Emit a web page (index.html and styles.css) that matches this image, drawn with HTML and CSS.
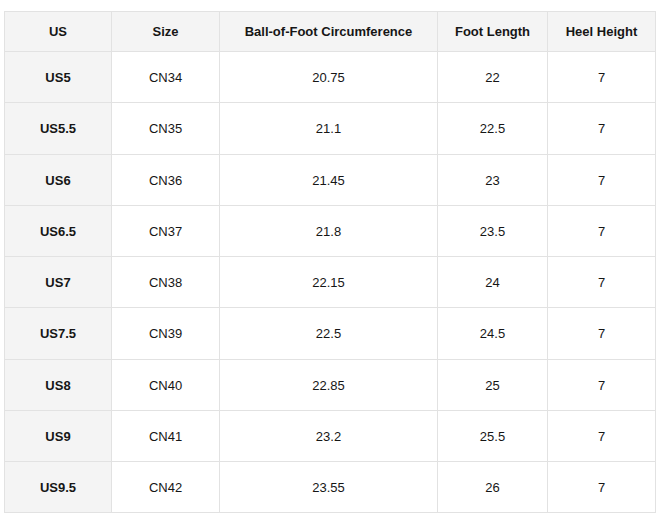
FILE: index.html
```html
<!DOCTYPE html>
<html>
<head>
<meta charset="utf-8">
<link rel="stylesheet" href="styles.css">
</head>
<body>
<div class="wrap">
<table class="size-table">
<colgroup>
<col class="c1"><col class="c2"><col class="c3"><col class="c4"><col class="c5">
</colgroup>
<thead>
<tr><th>US</th><th>Size</th><th>Ball-of-Foot Circumference</th><th>Foot Length</th><th>Heel Height</th></tr>
</thead>
<tbody>
<tr><th>US5</th><td>CN34</td><td>20.75</td><td>22</td><td>7</td></tr>
<tr><th>US5.5</th><td>CN35</td><td>21.1</td><td>22.5</td><td>7</td></tr>
<tr><th>US6</th><td>CN36</td><td>21.45</td><td>23</td><td>7</td></tr>
<tr><th>US6.5</th><td>CN37</td><td>21.8</td><td>23.5</td><td>7</td></tr>
<tr><th>US7</th><td>CN38</td><td>22.15</td><td>24</td><td>7</td></tr>
<tr><th>US7.5</th><td>CN39</td><td>22.5</td><td>24.5</td><td>7</td></tr>
<tr><th>US8</th><td>CN40</td><td>22.85</td><td>25</td><td>7</td></tr>
<tr><th>US9</th><td>CN41</td><td>23.2</td><td>25.5</td><td>7</td></tr>
<tr><th>US9.5</th><td>CN42</td><td>23.55</td><td>26</td><td>7</td></tr>
</tbody>
</table>
</div>
</body>
</html>
```
FILE: styles.css
```css
html, body {
  margin: 0;
  padding: 0;
  background: #fff;
}
.wrap {
  padding: 11px 4px 0 4px;
}
.size-table {
  border-collapse: collapse;
  table-layout: fixed;
  width: 652px;
  font-family: "Liberation Sans", Arial, sans-serif;
  font-size: 13px;
  color: #161616;
}
.c1 { width: 107px; }
.c2 { width: 108px; }
.c3 { width: 218px; }
.c4 { width: 110px; }
.c5 { width: 108px; }
.size-table th,
.size-table td {
  border: 1px solid #e2e2e2;
  text-align: center;
  vertical-align: middle;
  padding: 0;
  line-height: 16px;
}
.size-table thead th {
  background: #f4f4f4;
  font-weight: bold;
  height: 39px;
}
.size-table tbody th {
  background: #f4f4f4;
  font-weight: bold;
}
.size-table tbody td,
.size-table tbody th {
  height: 48.25px;
  padding-top: 2px;
}
.size-table tbody td {
  background: #fff;
  font-weight: normal;
}
```
